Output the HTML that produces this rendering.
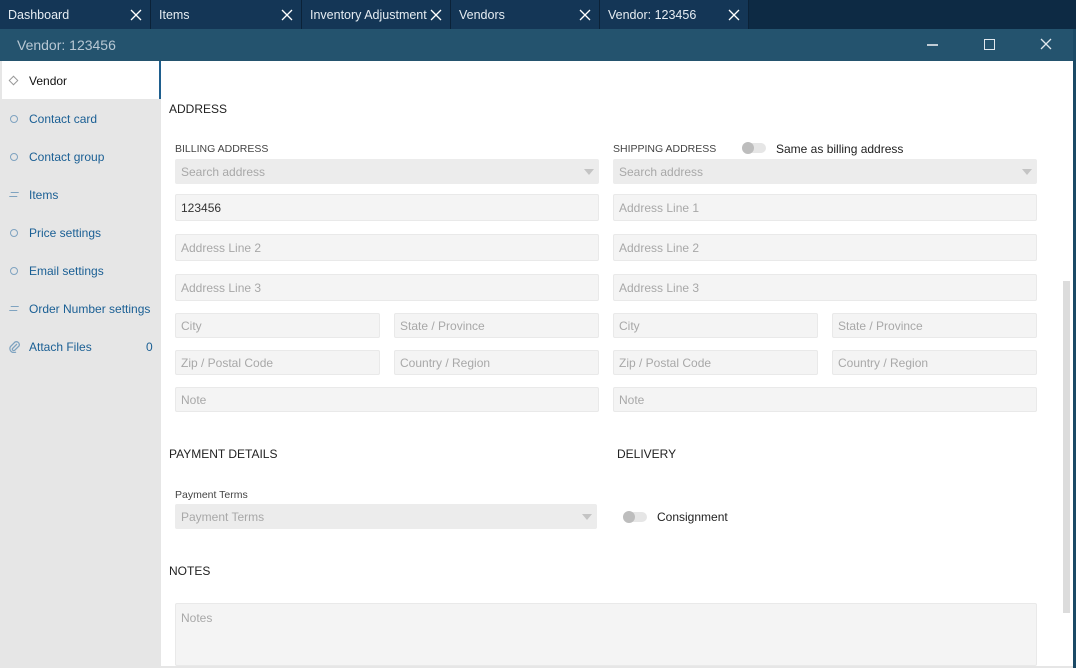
<!DOCTYPE html>
<html><head><meta charset="utf-8"><style>
*{box-sizing:border-box;margin:0;padding:0}
html,body{width:1076px;height:668px;overflow:hidden}
body{background:#fff;font-family:"Liberation Sans",sans-serif;font-size:12px;position:relative}
.a{position:absolute}
.tab{position:absolute;top:0;height:29px;background:#143656;color:#e6edf3;font-size:12.5px;line-height:30px;padding-left:8px;border-right:1px solid #0b2238}
.tab svg{position:absolute;right:8px;top:9px}
.nav{position:absolute;left:0;width:160px;height:38px;line-height:40px;color:#1a5f94;font-size:12px;padding-left:29px}
.ic{position:absolute;left:10px;top:16px;width:8px;height:8px;border:1.5px solid #7fa3c0;border-radius:50%}
.f{position:absolute;height:25px;background:#f4f4f4;border:1px solid #e9e9e9;border-radius:2px;color:#a8a8a8;font-size:12px;line-height:24px;padding-left:5px}
.s{background:#ececec;border-color:#ececec}
.s:after{content:"";position:absolute;right:4px;top:9px;border:5px solid transparent;border-top:6px solid #c4c4c4}
.h{position:absolute;font-size:12px;color:#222}
.l{position:absolute;font-size:10.5px;color:#444}
.tg{position:absolute;width:24px;height:10px;background:#e6e6e6;border-radius:5px}
.tg:before{content:"";position:absolute;left:0;top:-1px;width:12px;height:12px;border-radius:50%;background:#bdbdbd}
</style></head><body>
<div class="a" style="left:0;top:0;width:1076px;height:29px;background:#0d2a44"></div>
<div class="tab" style="left:0;width:151px">Dashboard<svg width="12" height="12"><path d="M1 1L11 11M11 1L1 11" stroke="#fff" stroke-width="1.3"/></svg></div>
<div class="tab" style="left:151px;width:151px">Items<svg width="12" height="12"><path d="M1 1L11 11M11 1L1 11" stroke="#fff" stroke-width="1.3"/></svg></div>
<div class="tab" style="left:302px;width:149px">Inventory Adjustment<svg width="12" height="12"><path d="M1 1L11 11M11 1L1 11" stroke="#fff" stroke-width="1.3"/></svg></div>
<div class="tab" style="left:451px;width:149px">Vendors<svg width="12" height="12"><path d="M1 1L11 11M11 1L1 11" stroke="#fff" stroke-width="1.3"/></svg></div>
<div class="tab" style="left:600px;width:149px">Vendor: 123456<svg width="12" height="12"><path d="M1 1L11 11M11 1L1 11" stroke="#fff" stroke-width="1.3"/></svg></div>
<div class="a" style="left:0;top:29px;width:1076px;height:32px;background:#24536e"></div>
<div class="a" style="left:17px;top:37px;color:#b8c8d4;font-size:14px">Vendor: 123456</div>
<div class="a" style="left:927px;top:44px;width:11px;height:1.5px;background:#c0ccd5"></div>
<div class="a" style="left:984px;top:39px;width:11px;height:11px;border:1.5px solid #e0e8ee"></div>
<svg class="a" style="left:1040px;top:38px" width="12" height="12"><path d="M1 1L11 11M11 1L1 11" stroke="#e0e8ee" stroke-width="1.3"/></svg>
<div class="a" style="left:0;top:61px;width:2px;height:607px;background:#1b4a66"></div>
<div class="a" style="left:1073px;top:29px;width:3px;height:639px;background:#1b4a66"></div>
<div class="a" style="left:0;top:61px;width:161px;height:607px;background:#e6e6e6"></div>
<div class="a" style="left:2px;top:61px;width:159px;height:38px;background:#fff;border-right:2px solid #1f5f8e"></div>
<div class="nav" style="top:61px;color:#111">Vendor<span class="a" style="left:10px;top:16px;width:7px;height:7px;border:1.3px solid #999;transform:rotate(45deg)"></span></div>
<div class="nav" style="top:99px"><span class="ic"></span>Contact card</div>
<div class="nav" style="top:137px"><span class="ic"></span>Contact group</div>
<div class="nav" style="top:175px"><span class="a" style="left:10px;top:17px;width:8px;height:5px;border-top:1.5px solid #7fa3c0;border-bottom:1.5px solid #7fa3c0;transform:skewX(-20deg)"></span>Items</div>
<div class="nav" style="top:213px"><span class="ic"></span>Price settings</div>
<div class="nav" style="top:251px"><span class="ic"></span>Email settings</div>
<div class="nav" style="top:289px"><span class="a" style="left:10px;top:17px;width:8px;height:5px;border-top:1.5px solid #7fa3c0;border-bottom:1.5px solid #7fa3c0;transform:skewX(-20deg)"></span>Order Number settings</div>
<div class="nav" style="top:327px"><svg class="a" style="left:8px;top:13px" width="12" height="13"><path d="M9 4L4.5 8.5a1.5 1.5 0 0 0 2 2L11 6a3 3 0 0 0-4-4L2.5 6.5a4 4 0 0 0 5.5 5.5" fill="none" stroke="#7fa3c0" stroke-width="1.3"/></svg>Attach Files<span class="a" style="left:146px">0</span></div>

<div class="a" style="left:1063px;top:281px;width:7px;height:332px;background:#dcdcdc"></div>

<div class="h" style="left:169px;top:102px">ADDRESS</div>
<div class="l" style="left:175px;top:143px">BILLING ADDRESS</div>
<div class="l" style="left:613px;top:143px">SHIPPING ADDRESS</div>
<div class="tg" style="left:742px;top:143px"></div>
<div class="a" style="left:776px;top:142px;font-size:12px;color:#222">Same as billing address</div>
<div class="f s" style="left:175px;top:159px;width:424px">Search address</div>
<div class="f s" style="left:613px;top:159px;width:424px">Search address</div>
<div class="f" style="left:175px;top:194px;width:424px;height:27px;line-height:26px;color:#333">123456</div>
<div class="f" style="left:613px;top:194px;width:424px;height:27px;line-height:26px">Address Line 1</div>
<div class="f" style="left:175px;top:234px;width:424px;height:27px;line-height:26px">Address Line 2</div>
<div class="f" style="left:613px;top:234px;width:424px;height:27px;line-height:26px">Address Line 2</div>
<div class="f" style="left:175px;top:274px;width:424px;height:27px;line-height:26px">Address Line 3</div>
<div class="f" style="left:613px;top:274px;width:424px;height:27px;line-height:26px">Address Line 3</div>
<div class="f" style="left:175px;top:313px;width:205px">City</div>
<div class="f" style="left:394px;top:313px;width:205px">State / Province</div>
<div class="f" style="left:613px;top:313px;width:205px">City</div>
<div class="f" style="left:832px;top:313px;width:205px">State / Province</div>
<div class="f" style="left:175px;top:350px;width:205px">Zip / Postal Code</div>
<div class="f" style="left:394px;top:350px;width:205px">Country / Region</div>
<div class="f" style="left:613px;top:350px;width:205px">Zip / Postal Code</div>
<div class="f" style="left:832px;top:350px;width:205px">Country / Region</div>
<div class="f" style="left:175px;top:387px;width:424px">Note</div>
<div class="f" style="left:613px;top:387px;width:424px">Note</div>

<div class="h" style="left:169px;top:447px">PAYMENT DETAILS</div>
<div class="h" style="left:617px;top:447px">DELIVERY</div>
<div class="l" style="left:175px;top:489px">Payment Terms</div>
<div class="f s" style="left:175px;top:504px;width:422px">Payment Terms</div>
<div class="tg" style="left:623px;top:512px"></div>
<div class="a" style="left:657px;top:510px;font-size:12px;color:#222">Consignment</div>
<div class="h" style="left:169px;top:564px">NOTES</div>
<div class="f" style="left:175px;top:603px;width:862px;height:63px;line-height:28px">Notes</div>
<div class="a" style="left:161px;top:666px;width:912px;height:2px;background:#e6e6e6"></div>
</body></html>
